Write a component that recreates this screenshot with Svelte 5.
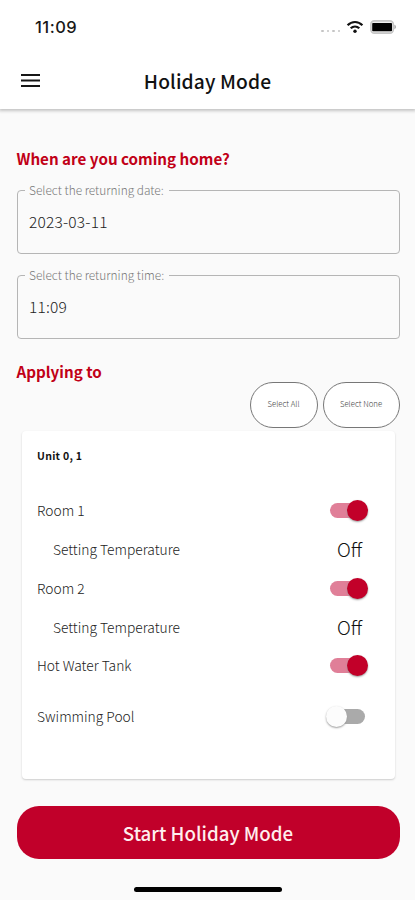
<script>
  const fields = [
    { label: 'Select the returning date:', value: '2023-03-11' },
    { label: 'Select the returning time:', value: '11:09' }
  ];
  let rows = $state([
    { name: 'Room 1', on: true, temp: 'Off', height: 39 },
    { name: 'Room 2', on: true, temp: 'Off', height: 39 },
    { name: 'Hot Water Tank', on: true, height: 38 },
    { name: 'Swimming Pool', on: false, height: 64 }
  ]);
  function setAll(on) {
    rows.forEach((row) => (row.on = on));
  }
</script>

<div class="screen">
  <header>
    <div class="status">
      <span class="clock">11:09</span>
      <div class="indicators">
        <span class="dots"><i></i><i></i><i></i><i></i></span>
        <svg class="wifi" width="18" height="14" viewBox="0 0 18 14" fill="none" stroke="#111" stroke-width="2.2">
          <path d="M1.6 5.2C5.8.9 12.2.9 16.4 5.2" />
          <path d="M4.7 8.3c2.5-2.4 6.1-2.4 8.6 0" />
          <circle cx="9" cy="11.2" r="1.7" fill="#111" stroke="none" />
        </svg>
        <svg class="battery" width="27" height="14" viewBox="0 0 27 14">
          <rect x=".9" y=".9" width="22.4" height="12.2" rx="3.4" fill="#eee" stroke="#c6c6c6" stroke-width="1.6" />
          <rect x="2.2" y="3" width="19.8" height="8.2" rx=".8" fill="#000" />
          <path d="M24.4 4.8c2.1.4 2.1 4 0 4.4z" fill="#aaa" />
        </svg>
      </div>
    </div>
    <div class="bar">
      <button class="menu" aria-label="Menu">
        <svg width="19" height="14" viewBox="0 0 19 14" stroke="#161616" stroke-width="2">
          <path d="M0 1.1h19M0 6.6h19M0 12.1h19" />
        </svg>
      </button>
      <h1>Holiday Mode</h1>
    </div>
  </header>

  <main>
    <h2>When are you coming home?</h2>
    {#each fields as field}
      <fieldset>
        <legend>{field.label}</legend>
        <span>{field.value}</span>
      </fieldset>
    {/each}

    <h2 class="applying">Applying to</h2>
    <div class="select">
      <button class="all" onclick={() => setAll(true)}>Select All</button>
      <button class="none" onclick={() => setAll(false)}>Select None</button>
    </div>

    <section class="card">
      <h3>Unit 0, 1</h3>
      {#each rows as row}
        <div class="row" style:height="{row.height}px">
          <span>{row.name}</span>
          <button class="switch" class:on={row.on} aria-label={row.name} onclick={() => (row.on = !row.on)}><i></i></button>
        </div>
        {#if row.temp}
          <div class="row setting">
            <span>Setting Temperature</span>
            <b>{row.temp}</b>
          </div>
        {/if}
      {/each}
    </section>

    <button class="start">Start Holiday Mode</button>
  </main>
  <div class="home"></div>
</div>

<style>
  :global(body) { margin: 0; background: #fafafa; }
  .screen {
    width: 415px;
    height: 900px;
    display: flex;
    flex-direction: column;
    overflow: hidden;
    background: #fafafa;
    font-family: "Noto Sans CJK JP", "Noto Sans", sans-serif;
    color: #222;
  }
  button { font: inherit; border: 0; padding: 0; margin: 0; background: none; }
  h1, h2, h3 { margin: 0; white-space: nowrap; }
  header { height: 109px; background: #fff; box-shadow: 0 1px 3px 1px #c4c4c4; flex: none; }
  .status { height: 54px; display: flex; justify-content: space-between; padding: 0 18px 0 35px; }
  .clock { font: 500 16.5px/54px Inter, sans-serif; letter-spacing: 0.5px; color: #181818; }
  .indicators { display: flex; align-items: center; }
  .dots { display: flex; gap: 3px; margin: 8px 6px 0 0; }
  .dots i { width: 2.4px; height: 2.4px; border-radius: 50%; background: #c4c4c4; }
  .wifi { margin-right: 6px; }
  .bar { height: 54px; display: grid; grid-template-columns: 40px 335px 40px; align-items: center; }
  .menu { display: flex; padding-left: 21px; }
  h1 { font-size: 19.2px; font-weight: 500; line-height: 54px; text-align: center; letter-spacing: 0.12px; color: #111; }
  main { padding: 37px 15.5px 0 16.5px; display: flex; flex-direction: column; }
  h2 { height: 24px; font-size: 15.2px; line-height: 24px; font-weight: 700; color: #c10017; }
  fieldset {
    box-sizing: border-box;
    height: 73px;
    margin: 11px 0 0;
    padding: 0 0 0 11.5px;
    border: 1.3px solid #b5b5b5;
    border-radius: 4px;
    min-width: 0;
  }
  fieldset + fieldset { margin-top: 12px; }
  legend { height: 18px; margin-left: -4px; padding: 0 5px 0 4px; font-size: 11.9px; font-weight: 300; line-height: 18px; color: #777; }
  fieldset span { display: block; font-size: 15.5px; letter-spacing: 0.2px; font-weight: 300; line-height: 24px; padding-top: 10px; color: #222; }
  .applying { margin-top: 20px; }
  .select { display: flex; justify-content: flex-end; gap: 5px; margin-top: -1px; }
  .select button { box-sizing: border-box; height: 46px; border: 1px solid #777; border-radius: 23px; background: #fff; font-size: 7.8px; font-weight: 300; line-height: 42px; padding-bottom: 2px; color: #444; }
  .all { width: 68px; }
  .none { width: 77px; }
  .card { box-sizing: border-box; height: 348px; margin: 3px 4.5px 0 5px; padding: 13px 26.5px 0 15.5px; border-radius: 4px; background: #fff; box-shadow: 0 1px 2px #ccc; }
  h3 { font-size: 10.5px; letter-spacing: 0.28px; font-weight: 700; line-height: 24px; height: 46px; color: #111; }
  .row { display: flex; align-items: center; justify-content: space-between; height: 39px; font-size: 13.8px; font-weight: 300; white-space: nowrap; color: #222; }
  .setting { padding-left: 16px; }
  .setting b { width: 38px; text-align: center; font-size: 19px; font-weight: 300; color: #111; }
  .switch { position: relative; width: 35px; height: 15px; margin: 1px 3.5px 0 0; border-radius: 8px; background: #aaa; }
  .switch i { position: absolute; left: -4px; top: -3px; width: 21px; height: 21px; border-radius: 50%; background: #fcfcfc; box-shadow: 0 1px 2px #999; }
  .switch.on { background: #e07f98; }
  .switch.on i { left: 17px; background: #c20029; }
  .start { height: 53px; margin-top: 26.5px; border-radius: 22px; background: #c1002a; color: #ffeeee; font-size: 18.7px; font-weight: 500; line-height: 53px; }
  .home { width: 148px; height: 5px; border-radius: 3px; background: #000; margin: 28px auto 0; }
</style>
